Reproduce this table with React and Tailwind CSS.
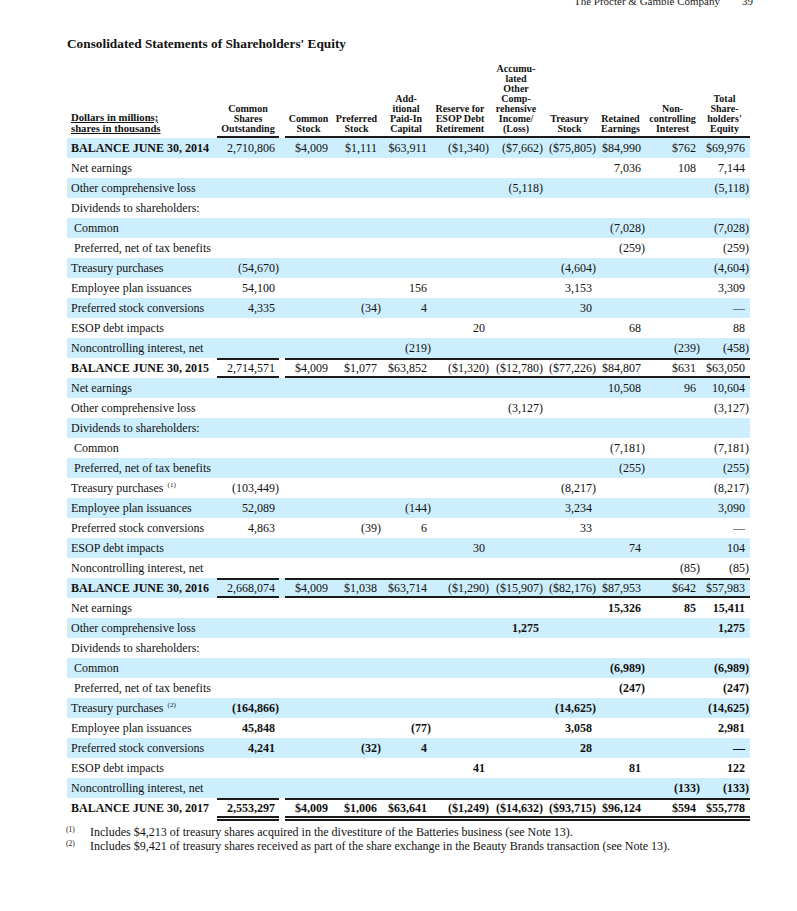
import React from "react";

// grid columns: label | shares | gap | common | preferred | apic | reserve | aoci | treasury | retained | nci | total | pad
const GRID =
  "grid grid-cols-[150px_62px_6px_47px_49px_50px_58px_54px_53px_49px_55px_49px_1px]";

const KEYS = ["sh", "cs", "ps", "apic", "res", "aoci", "tr", "re", "nci", "tot"];

const HEADERS = [
  ["Common", "Shares", "Outstanding"],
  ["Common", "Stock"],
  ["Preferred", "Stock"],
  ["Add-", "itional", "Paid-In", "Capital"],
  ["Reserve for", "ESOP Debt", "Retirement"],
  ["Accumu-", "lated", "Other", "Comp-", "rehensive", "Income/", "(Loss)"],
  ["Treasury", "Stock"],
  ["Retained", "Earnings"],
  ["Non-", "controlling", "Interest"],
  ["Total", "Share-", "holders'", "Equity"],
];

const section = (bold, sup, d) => [
  { label: "Net earnings", v: d.net, bold },
  { label: "Other comprehensive loss", v: d.ocl, bold },
  { label: "Dividends to shareholders:", v: {}, bold },
  { label: "Common", indent: true, v: d.common, bold },
  { label: "Preferred, net of tax benefits", indent: true, v: d.pref, bold },
  { label: "Treasury purchases", sup, v: d.treas, bold },
  { label: "Employee plan issuances", v: d.emp, bold },
  { label: "Preferred stock conversions", v: d.conv, bold },
  { label: "ESOP debt impacts", v: d.esop, bold },
  { label: "Noncontrolling interest, net", v: d.nci, bold },
];

const ROWS = [
  {
    label: "BALANCE JUNE 30, 2014",
    balance: true,
    v: { sh: "2,710,806", cs: "$4,009", ps: "$1,111", apic: "$63,911", res: "($1,340)", aoci: "($7,662)", tr: "($75,805)", re: "$84,990", nci: "$762", tot: "$69,976" },
  },
  ...section(false, null, {
    net: { re: "7,036", nci: "108", tot: "7,144" },
    ocl: { aoci: "(5,118)", tot: "(5,118)" },
    common: { re: "(7,028)", tot: "(7,028)" },
    pref: { re: "(259)", tot: "(259)" },
    treas: { sh: "(54,670)", tr: "(4,604)", tot: "(4,604)" },
    emp: { sh: "54,100", apic: "156", tr: "3,153", tot: "3,309" },
    conv: { sh: "4,335", ps: "(34)", apic: "4", tr: "30", tot: "—" },
    esop: { res: "20", re: "68", tot: "88" },
    nci: { apic: "(219)", nci: "(239)", tot: "(458)" },
  }),
  {
    label: "BALANCE JUNE 30, 2015",
    balance: true,
    rule: "both",
    v: { sh: "2,714,571", cs: "$4,009", ps: "$1,077", apic: "$63,852", res: "($1,320)", aoci: "($12,780)", tr: "($77,226)", re: "$84,807", nci: "$631", tot: "$63,050" },
  },
  ...section(false, "(1)", {
    net: { re: "10,508", nci: "96", tot: "10,604" },
    ocl: { aoci: "(3,127)", tot: "(3,127)" },
    common: { re: "(7,181)", tot: "(7,181)" },
    pref: { re: "(255)", tot: "(255)" },
    treas: { sh: "(103,449)", tr: "(8,217)", tot: "(8,217)" },
    emp: { sh: "52,089", apic: "(144)", tr: "3,234", tot: "3,090" },
    conv: { sh: "4,863", ps: "(39)", apic: "6", tr: "33", tot: "—" },
    esop: { res: "30", re: "74", tot: "104" },
    nci: { nci: "(85)", tot: "(85)" },
  }),
  {
    label: "BALANCE JUNE 30, 2016",
    balance: true,
    rule: "both",
    v: { sh: "2,668,074", cs: "$4,009", ps: "$1,038", apic: "$63,714", res: "($1,290)", aoci: "($15,907)", tr: "($82,176)", re: "$87,953", nci: "$642", tot: "$57,983" },
  },
  ...section(true, "(2)", {
    net: { re: "15,326", nci: "85", tot: "15,411" },
    ocl: { aoci: "1,275", tot: "1,275" },
    common: { re: "(6,989)", tot: "(6,989)" },
    pref: { re: "(247)", tot: "(247)" },
    treas: { sh: "(164,866)", tr: "(14,625)", tot: "(14,625)" },
    emp: { sh: "45,848", apic: "(77)", tr: "3,058", tot: "2,981" },
    conv: { sh: "4,241", ps: "(32)", apic: "4", tr: "28", tot: "—" },
    esop: { res: "41", re: "81", tot: "122" },
    nci: { nci: "(133)", tot: "(133)" },
  }),
  {
    label: "BALANCE JUNE 30, 2017",
    balance: true,
    bold: true,
    rule: "double",
    v: { sh: "2,553,297", cs: "$4,009", ps: "$1,006", apic: "$63,641", res: "($1,249)", aoci: "($14,632)", tr: "($93,715)", re: "$96,124", nci: "$594", tot: "$55,778" },
  },
];

function Num({ v }) {
  if (!v) return null;
  const neg = v.endsWith(")");
  return (
    <span>
      {v}
      {!neg && <span className="invisible">)</span>}
    </span>
  );
}

function Row({ row, shaded }) {
  const rule =
    row.rule === "both"
      ? "border-t-2 border-b-2 border-[#1a1a1a]"
      : row.rule === "double"
      ? "border-t-2 border-b-[5px] border-double border-[#1a1a1a]"
      : "";
  const cell = `flex items-center justify-end whitespace-nowrap ${rule} ${row.bold ? "font-bold" : ""}`;
  return (
    <div
      className={`${GRID} ${row.rule === "double" ? "h-[23px]" : "h-[20px]"} ${
        shaded ? "bg-[#cdeefc]" : ""
      } text-[12px] leading-[14px] text-[#111]`}
    >
      <div
        className={`flex items-center whitespace-nowrap ${row.indent ? "pl-[7px]" : "pl-[4px]"} ${
          row.balance ? "font-bold" : ""
        } ${row.rule === "double" ? "pb-[3px]" : ""}`}
      >
        {row.label}
        {row.sup && <sup className="ml-[4px] text-[7px]">{row.sup}</sup>}
      </div>
      <div className={cell}>
        <Num v={row.v.sh} />
      </div>
      <div />
      {KEYS.slice(1).map((k) => (
        <div key={k} className={cell}>
          <Num v={row.v[k]} />
        </div>
      ))}
      <div className={rule} />
    </div>
  );
}

export default function App() {
  return (
    <div
      className="w-[797px] h-[911px] bg-white text-[#111] overflow-hidden"
      style={{ fontFamily: '"Liberation Serif", "Times New Roman", serif' }}
    >
      {/* running page header, cut at the top edge */}
      <div className="-mt-[4px] flex justify-end gap-[22px] pr-[44px] text-[11px] leading-[11px] text-[#222]">
        <span>The Procter &amp; Gamble Company</span>
        <span>39</span>
      </div>

      <h1 className="mt-[29px] pl-[67px] text-[13.3px] leading-[15px] font-bold">
        Consolidated Statements of Shareholders' Equity
      </h1>

      <div className="ml-[67px] mt-[13px] w-[683px]">
        {/* column headings */}
        <div className={`${GRID} font-bold`}>
          <div className="flex flex-col justify-end pb-[4px] pl-[4px] text-[10.7px] leading-[11px] underline underline-offset-1">
            <span>Dollars in millions;</span>
            <span>shares in thousands</span>
          </div>
          <div className="flex flex-col justify-end items-center pb-[2px] border-b-2 border-[#1a1a1a] text-[10px] leading-[10px] text-center">
            {HEADERS[0].map((t) => (
              <span key={t}>{t}</span>
            ))}
          </div>
          <div />
          {HEADERS.slice(1).map((h, i) => (
            <div
              key={i}
              className="flex flex-col justify-end items-center pb-[2px] border-b-2 border-[#1a1a1a] text-[10px] leading-[10px] text-center whitespace-nowrap"
            >
              {h.map((t) => (
                <span key={t}>{t}</span>
              ))}
            </div>
          ))}
          <div className="border-b-2 border-[#1a1a1a]" />
        </div>

        {ROWS.map((row, i) => (
          <Row key={i} row={row} shaded={i % 2 === 0} />
        ))}
      </div>

      {/* footnotes */}
      <div className="mt-[4px] pl-[66px] text-[12px] leading-[14px] text-[#111]">
        <div className="flex">
          <span className="w-[24px] text-[7.5px] leading-[10px]">(1)</span>
          <span>
            Includes $4,213 of treasury shares acquired in the divestiture of the Batteries business (see Note 13).
          </span>
        </div>
        <div className="flex">
          <span className="w-[24px] text-[7.5px] leading-[10px]">(2)</span>
          <span>
            Includes $9,421 of treasury shares received as part of the share exchange in the Beauty Brands
            transaction (see Note 13).
          </span>
        </div>
      </div>
    </div>
  );
}
